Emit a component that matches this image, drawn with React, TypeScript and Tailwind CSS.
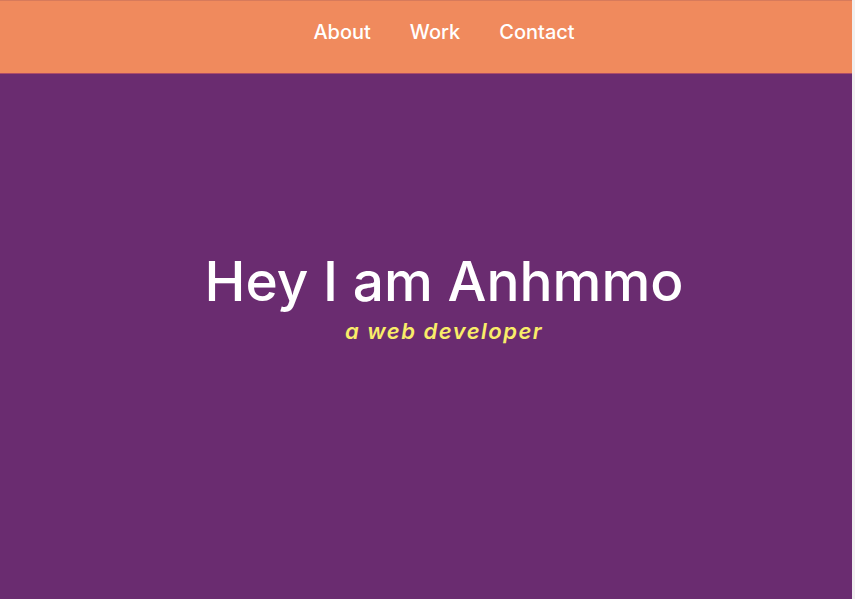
import React from "react";

export default function App() {
  return (
    <div className="flex min-h-screen w-full bg-[#f1f1f1]" style={{ fontFamily: '"Inter", "Noto Sans", sans-serif' }}>
      <div className="flex w-[852px] flex-col bg-[#6a2c70]">
        <header className="h-[74px] border-t border-b border-t-[#d77a5b] border-b-[#ad4d69] bg-[#f08a5d] pl-[36px] pt-[19px]">
          <nav>
            <ul className="flex justify-center gap-[39px] text-[20px] leading-[24px] font-medium text-white">
              <li>About</li>
              <li>Work</li>
              <li>Contact</li>
            </ul>
          </nav>
        </header>
        <main className="flex flex-1 flex-col items-center pl-[36px] pt-[180px]">
          <h1 className="text-[55px] leading-[55px] font-medium text-white">Hey I am Anhmmo</h1>
          <p className="mt-[11px] text-[22px] leading-[22px] font-semibold italic tracking-[1.5px] text-[#f9ed69]">a web developer</p>
        </main>
      </div>
    </div>
  );
}
